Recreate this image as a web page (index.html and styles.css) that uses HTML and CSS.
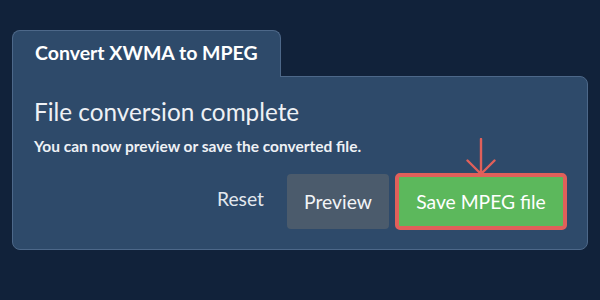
FILE: index.html
```html
<!DOCTYPE html>
<html>
<head>
<meta charset="utf-8">
<link rel="stylesheet" href="styles.css">
</head>
<body>
<div class="widget">
  <div class="tab">Convert XWMA to MPEG</div>
  <div class="panel">
    <h1 class="title">File conversion complete</h1>
    <p class="sub">You can now preview or save the converted file.</p>
    <div class="actions">
      <button class="btn reset">Reset</button>
      <button class="btn preview">Preview</button>
      <button class="btn save">Save MPEG file
        <svg class="arrow" width="30" height="39" viewBox="0 0 30 39" aria-hidden="true">
          <path d="M15 1 V36 M1.5 22.5 L15 36 L28.5 22.5" fill="none" stroke="#e0605a" stroke-width="2.4" stroke-linecap="round" stroke-linejoin="round"/>
        </svg>
      </button>
    </div>
  </div>
</div>
</body>
</html>
```
FILE: styles.css
```css
* { box-sizing: border-box; }
html, body { margin: 0; }
body {
  width: 600px;
  height: 300px;
  background: #11223a;
  font-family: Lato, "Open Sans", sans-serif;
  color: #f2f4f7;
  padding: 30px 12px 0 12px;
  overflow: hidden;
}
.widget { width: 576px; }
.tab {
  position: relative;
  z-index: 1;
  width: 269px;
  height: 47px;
  margin-bottom: -1px;
  background: #2e4a6a;
  border: 1px solid #4d6889;
  border-bottom: none;
  border-radius: 8px 8px 0 0;
  padding: 10px 0 0 22px;
  font-weight: 700;
  font-size: 19.5px;
  line-height: 24px;
  color: #ffffff;
}
.panel {
  height: 174px;
  background: #2e4a6a;
  border: 1px solid #4d6889;
  border-radius: 0 8px 8px 8px;
  padding: 20px 20px 0 21px;
}
.title {
  margin: 0;
  font-weight: 400;
  font-size: 24.3px;
  line-height: 30px;
  color: #eef1f5;
}
.sub {
  margin: 10px 0 0 0;
  font-weight: 700;
  font-size: 15.5px;
  line-height: 18px;
  color: #eef1f5;
}
.actions {
  margin-top: 18px;
  display: flex;
  justify-content: flex-end;
  align-items: center;
}
.btn {
  font-family: Lato, "Open Sans", sans-serif;
  font-size: 19.3px;
  line-height: 23px;
  color: #f2f4f7;
  border: none;
  background: none;
  cursor: pointer;
}
.reset {
  padding: 0;
  margin-right: 23px;
  margin-top: -6px;
  color: #e2e7ee;
}
.preview {
  width: 102px;
  height: 55px;
  background: #4b5b6c;
  border-radius: 4px;
  margin-right: 6px;
}
.save {
  position: relative;
  width: 172px;
  height: 57px;
  background: #5cb85c;
  border: 4px solid #e0605a;
  border-radius: 5px;
  color: #ffffff;
}
.arrow {
  position: absolute;
  left: 50%;
  bottom: 100%;
  margin-left: -15px;
}
```
